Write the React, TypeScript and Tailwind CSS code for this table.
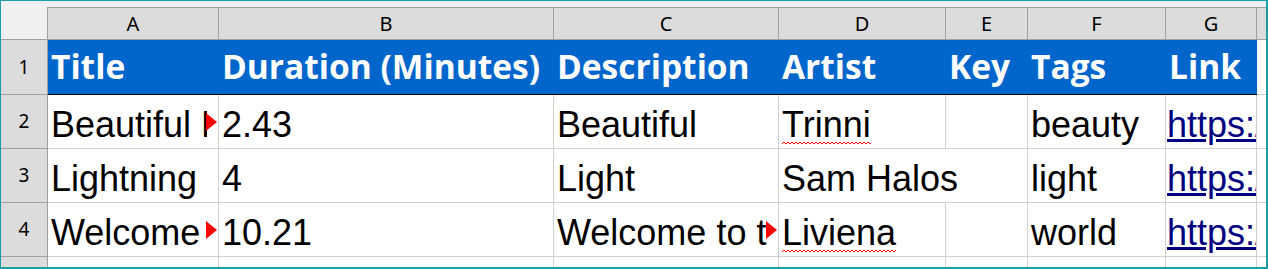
import React from "react";

// column widths incl. the 1px right grid line
const widths = [171, 335, 225, 167, 82, 138, 91];
const letters = ["A", "B", "C", "D", "E", "F", "G"];
const heads = ["Title", "Duration (Minutes)", "Description", "Artist", "Key", "Tags", "Link"];

type Row = {
  n: number;
  cells: string[];
  clip?: number[]; // columns that show the red overflow marker
  spell?: number[]; // columns with a spell-check squiggle
  spill?: number; // column whose text runs on into the empty cell to its right
};

const rows: Row[] = [
  { n: 2, cells: ["Beautiful Day", "2.43", "Beautiful", "Trinni", "", "beauty", "https://www"], clip: [0], spell: [3] },
  { n: 3, cells: ["Lightning", "4", "Light", "Sam Halos", "", "light", "https://www"], spill: 3 },
  { n: 4, cells: ["Welcome to the World", "10.21", "Welcome to the World", "Liviena", "", "world", "https://www"], clip: [0, 2], spell: [3] },
];

function ClipMark() {
  return (
    <svg className="absolute right-[1px] top-1/2 -translate-y-1/2" width="11" height="18" viewBox="0 0 11 18">
      <polygon points="0,0 11,9 0,18" fill="#ff0000" />
    </svg>
  );
}

function Squiggle() {
  return (
    <svg className="absolute left-0 right-0 bottom-[0px] h-[4px] w-full" height="4">
      <defs>
        <pattern id="squig" width="4" height="4" patternUnits="userSpaceOnUse">
          <path d="M0 3 L2 1 L4 3" fill="none" stroke="#ff0000" strokeWidth="1" />
        </pattern>
      </defs>
      <rect width="100%" height="4" fill="url(#squig)" />
    </svg>
  );
}

function RowHeader({ n, h }: { n?: number; h: string }) {
  return (
    <div
      className={`w-[47px] shrink-0 ${h} flex items-center justify-center bg-[#dcdcdc] border-r border-b border-[#a0a0a0] text-[19px] text-black`}
      style={{ fontFamily: '"Noto Sans", sans-serif' }}
    >
      {n}
    </div>
  );
}

function DataRow({ r }: { r: Row }) {
  const out: React.ReactNode[] = [];
  for (let i = 0; i < r.cells.length; i++) {
    const c = r.cells[i];
    let w = widths[i];
    if (r.spill === i) {
      w += widths[i + 1];
    }
    const clipped = r.clip?.includes(i);
    out.push(
      <div
        key={i}
        className="relative shrink-0 flex items-end overflow-hidden whitespace-nowrap border-r border-b border-[#d0d0d0] text-[36px] leading-[41px] text-black"
        style={{ width: w, fontFamily: '"Liberation Sans", Arial, sans-serif' }}
      >
        <div className={`flex-1 min-w-0 overflow-hidden pb-[3px] ${i === 6 ? "pl-[1px]" : "pl-[3px]"} ${clipped ? "mr-[11px]" : ""}`}>
          {i === 6 ? (
            <span className="text-[#000080] underline">{c}</span>
          ) : r.spell?.includes(i) ? (
            <span className="relative inline-block">
              {c}
              <Squiggle />
            </span>
          ) : (
            <span>{c}</span>
          )}
        </div>
        {clipped && <ClipMark />}
      </div>
    );
    if (r.spill === i) i++;
  }
  return (
    <div className="flex h-[54px]">
      <RowHeader n={r.n} h="h-[54px]" />
      {out}
      <div className="flex-1 border-b border-[#d0d0d0]" />
    </div>
  );
}

export default function App() {
  return (
    <div className="w-[1268px] h-[269px] bg-white border-l border-t border-r-2 border-b-2 border-[#1b9fa6] overflow-hidden">
      {/* column letters */}
      <div className="flex h-[39px] bg-[#f0f0f0]">
        <div className="w-[46px] shrink-0 border-b border-[#a0a0a0]" />
        <div className="flex-1 pt-[6px]">
          <div
            className="flex h-[33px] border-t border-b border-l border-[#a0a0a0] bg-[#dcdcdc] text-[20px] text-black"
            style={{ fontFamily: '"Noto Sans", sans-serif' }}
          >
            {letters.map((l, i) => (
              <div
                key={l}
                className="shrink-0 flex items-center justify-center border-r border-[#a0a0a0]"
                style={{ width: widths[i] }}
              >
                {l}
              </div>
            ))}
            <div className="flex-1" />
          </div>
        </div>
      </div>

      {/* row 1: headings */}
      <div className="flex h-[55px]">
        <RowHeader n={1} h="h-[55px]" />
        {heads.map((t, i) => (
          <div
            key={t}
            className="shrink-0 flex items-end overflow-hidden whitespace-nowrap bg-[#0066cc] border-b border-b-black pl-[3px] pb-[5px] text-[33.5px] leading-[46px] font-bold text-white"
            style={{ width: widths[i], fontFamily: '"Open Sans", sans-serif' }}
          >
            {t}
          </div>
        ))}
        <div className="flex-1 border-b border-[#d0d0d0]" />
      </div>

      {rows.map((r) => (
        <DataRow key={r.n} r={r} />
      ))}

      {/* row 5, cut off */}
      <div className="flex h-[10px]">
        <div className="w-[47px] shrink-0 h-[10px] bg-[#dcdcdc] border-r border-[#a0a0a0]" />
        {widths.map((w, i) => (
          <div key={i} className="shrink-0 border-r border-[#d0d0d0]" style={{ width: w }} />
        ))}
        <div className="flex-1" />
      </div>
    </div>
  );
}
